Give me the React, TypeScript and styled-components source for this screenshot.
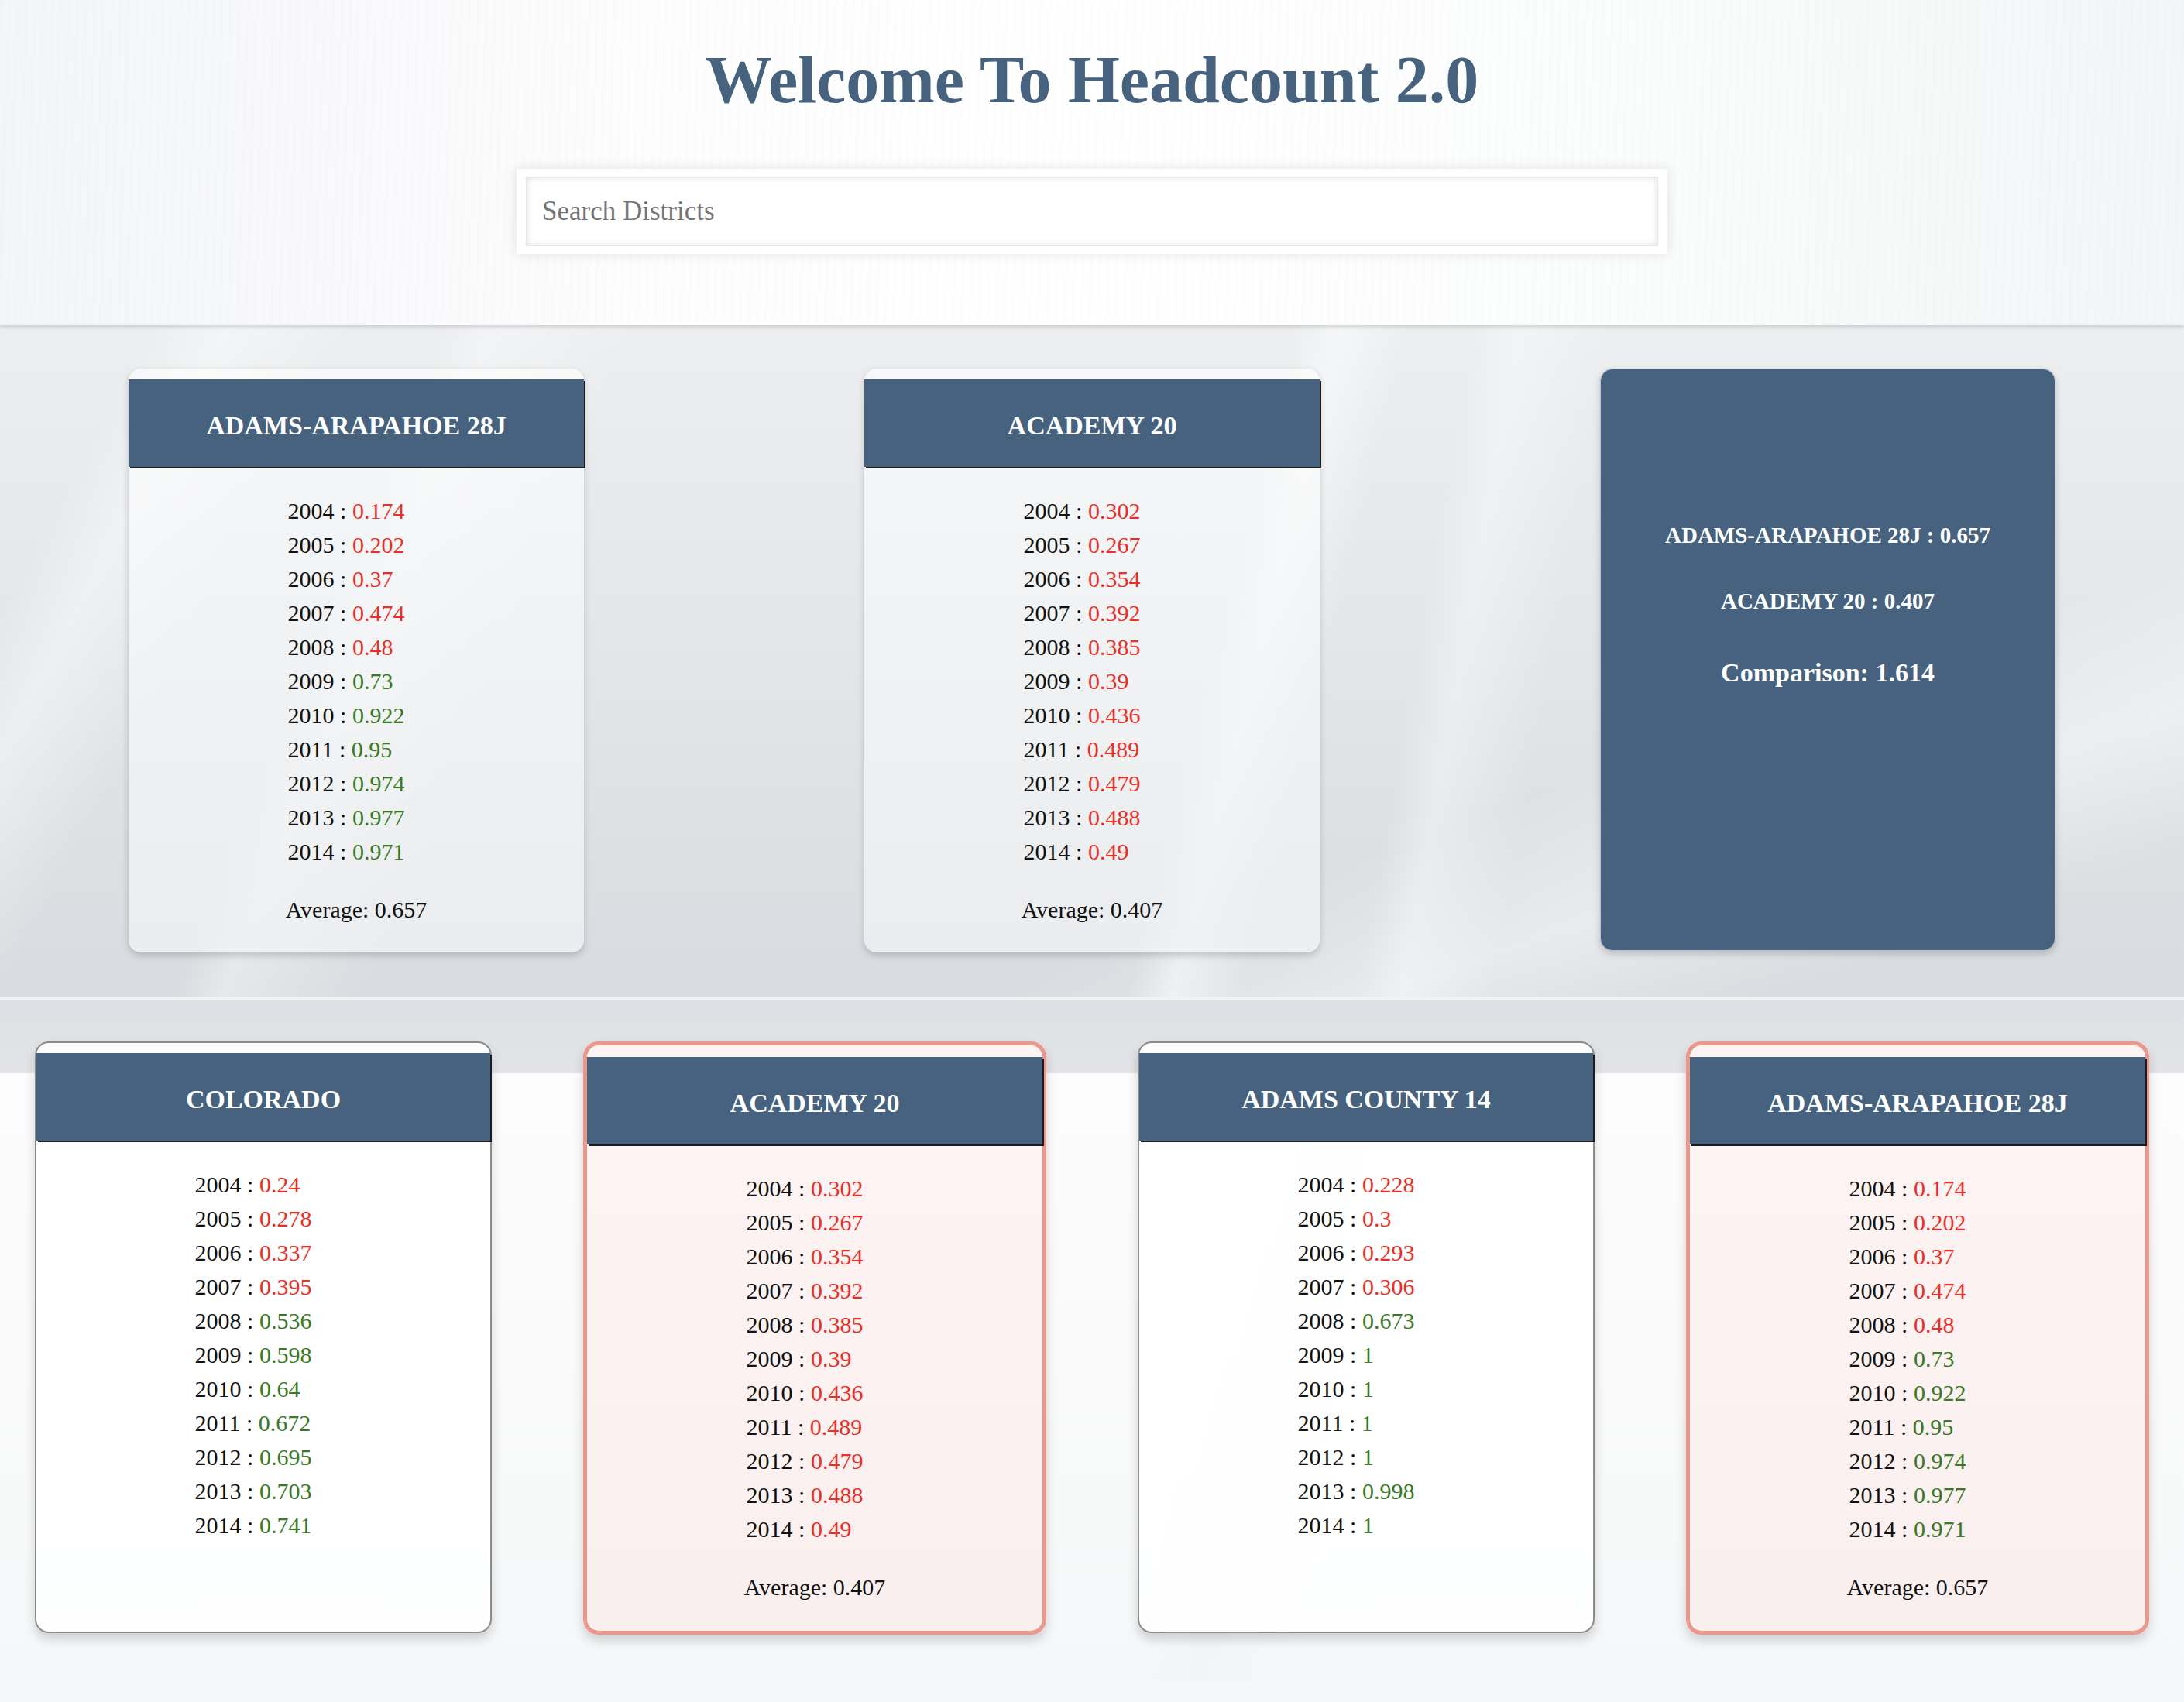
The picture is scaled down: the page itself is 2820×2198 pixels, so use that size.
import React from "react";
import styled, { createGlobalStyle, css } from "styled-components";

type District = {
  name: string;
  data: [string, number][];
  average?: number;
};

const years = ["2004", "2005", "2006", "2007", "2008", "2009", "2010", "2011", "2012", "2013", "2014"];

const makeData = (values: number[]): [string, number][] =>
  values.map((v, i) => [years[i], v]);

const adamsArapahoe: District = {
  name: "ADAMS-ARAPAHOE 28J",
  data: makeData([0.174, 0.202, 0.37, 0.474, 0.48, 0.73, 0.922, 0.95, 0.974, 0.977, 0.971]),
  average: 0.657,
};

const academy: District = {
  name: "ACADEMY 20",
  data: makeData([0.302, 0.267, 0.354, 0.392, 0.385, 0.39, 0.436, 0.489, 0.479, 0.488, 0.49]),
  average: 0.407,
};

const colorado: District = {
  name: "COLORADO",
  data: makeData([0.24, 0.278, 0.337, 0.395, 0.536, 0.598, 0.64, 0.672, 0.695, 0.703, 0.741]),
};

const adamsCounty: District = {
  name: "ADAMS COUNTY 14",
  data: makeData([0.228, 0.3, 0.293, 0.306, 0.673, 1, 1, 1, 1, 0.998, 1]),
};

const districts: { district: District; selected: boolean }[] = [
  { district: colorado, selected: false },
  { district: academy, selected: true },
  { district: adamsCounty, selected: false },
  { district: adamsArapahoe, selected: true },
];

function DistrictCard({ district, variant }: { district: District; variant: "compare" | "plain" | "selected" }) {
  return (
    <Card $variant={variant}>
      <CardHeader>{district.name}</CardHeader>
      <RowList>
        {district.data.map(([year, value]) => (
          <Row key={year}>
            {year} : <Value $low={value < 0.5}>{value}</Value>
          </Row>
        ))}
      </RowList>
      {district.average !== undefined && <Average>Average: {district.average}</Average>}
    </Card>
  );
}

export default function App() {
  return (
    <>
      <GlobalStyle />
      <Page>
        <Top>
          <Title>Welcome To Headcount 2.0</Title>
          <SearchFrame>
            <SearchInput placeholder="Search Districts" />
          </SearchFrame>
        </Top>

        <CompareBand>
          <DistrictCard district={adamsArapahoe} variant="compare" />
          <DistrictCard district={academy} variant="compare" />
          <CompareCard>
            <CompareLine>ADAMS-ARAPAHOE 28J : 0.657</CompareLine>
            <CompareLine>ACADEMY 20 : 0.407</CompareLine>
            <CompareTotal>Comparison: 1.614</CompareTotal>
          </CompareCard>
        </CompareBand>

        <DistrictGrid>
          {districts.map(({ district, selected }) => (
            <DistrictCard
              key={district.name}
              district={district}
              variant={selected ? "selected" : "plain"}
            />
          ))}
        </DistrictGrid>
      </Page>
    </>
  );
}

const GlobalStyle = createGlobalStyle`
  * { box-sizing: border-box; }
  html, body {
    margin: 0;
    padding: 0;
    background: #fafbfc;
    font-family: "Liberation Serif", "DejaVu Serif", serif;
    color: #111;
  }
`;

const Page = styled.div`
  width: 2820px;
  min-height: 2198px;
  background: linear-gradient(180deg, #ffffff 0%, #f6f7f9 100%);
`;

const Top = styled.header`
  height: 420px;
  padding-top: 60px;
  display: flex;
  flex-direction: column;
  align-items: center;
  background:
    repeating-linear-gradient(92deg, rgba(0, 0, 0, 0.007) 0 3px, transparent 3px 11px),
    linear-gradient(90deg, #f4f5f7 0%, #fdfdfe 30%, #ffffff 50%, #fbfcfc 75%, #f3f5f6 100%);
  box-shadow: 0 3px 4px rgba(0, 0, 0, 0.12);
  position: relative;
  z-index: 1;
`;

const Title = styled.h1`
  margin: 0;
  font-size: 86px;
  line-height: 86px;
  font-weight: 700;
  color: #46627f;
`;

const SearchFrame = styled.div`
  margin-top: 72px;
  width: 1486px;
  height: 110px;
  padding: 10px 12px;
  background: #ffffff;
  box-shadow: 0 0 14px rgba(30, 40, 70, 0.12);
`;

const SearchInput = styled.input`
  width: 100%;
  height: 100%;
  border: 1px solid #e4e6ec;
  outline: none;
  padding: 0 20px;
  font-family: "Liberation Serif", "DejaVu Serif", serif;
  font-size: 35px;
  color: #333;
  box-shadow: inset 0 0 8px rgba(40, 50, 90, 0.16);
  &::placeholder {
    color: #757575;
  }
`;

const CompareBand = styled.section`
  height: 872px;
  padding: 56px 166px 0;
  display: flex;
  justify-content: space-between;
  align-items: flex-start;
  border-bottom: 4px solid #f1f2f3;
  background:
    linear-gradient(118deg, transparent 0 6%, rgba(255, 255, 255, 0.4) 9%, transparent 14%),
    linear-gradient(112deg, transparent 0 18%, rgba(255, 255, 255, 0.35) 20%, transparent 26%),
    linear-gradient(104deg, transparent 0 55%, rgba(255, 255, 255, 0.5) 57%, transparent 60%),
    linear-gradient(100deg, transparent 0 64%, rgba(255, 255, 255, 0.35) 66%, transparent 70%),
    linear-gradient(160deg, transparent 0 70%, rgba(255, 255, 255, 0.4) 80%, transparent 90%),
    linear-gradient(180deg, #eceef0 0%, #e3e5e8 50%, #d8dbdf 100%);
`;

const Card = styled.article<{ $variant: "compare" | "plain" | "selected" }>`
  display: flex;
  flex-direction: column;
  border-radius: 16px;
  ${({ $variant }) =>
    $variant === "compare"
      ? css`
          width: 588px;
          height: 754px;
          padding-top: 14px;
          background: linear-gradient(180deg, rgba(255, 255, 255, 0.6), rgba(240, 242, 244, 0.75));
          box-shadow: 0 4px 10px rgba(0, 0, 0, 0.18);
        `
      : $variant === "selected"
      ? css`
          width: 598px;
          height: 766px;
          padding-top: 15px;
          border: 5px solid #eb978c;
          border-radius: 20px;
          background: linear-gradient(180deg, #fdf5f4, #f9efee);
          box-shadow: 0 8px 14px rgba(0, 0, 0, 0.16);
        `
      : css`
          width: 590px;
          height: 764px;
          padding-top: 13px;
          border: 2px solid #8c8c8c;
          border-radius: 18px;
          background: rgba(255, 255, 255, 0.88);
          box-shadow: 0 8px 14px rgba(0, 0, 0, 0.16);
        `}
`;

const CardHeader = styled.h2`
  margin: 0;
  height: 113px;
  padding-top: 6px;
  display: flex;
  align-items: center;
  justify-content: center;
  background: #46627f;
  box-shadow: 2px 2px 0 #1c1c1c;
  color: #ffffff;
  font-size: 34px;
  font-weight: 700;
`;

const RowList = styled.ul`
  list-style: none;
  margin: 35px auto 0;
  padding: 0 26px 0 0;
  display: flex;
  flex-direction: column;
  align-items: flex-start;
  align-self: center;
`;

const Row = styled.li`
  font-size: 30px;
  line-height: 44px;
  white-space: nowrap;
`;

const Value = styled.span<{ $low: boolean }>`
  color: ${({ $low }) => ($low ? "#ec2f26" : "#3a7a26")};
`;

const Average = styled.p`
  margin: 31px 0 0;
  text-align: center;
  font-size: 30px;
  line-height: 44px;
`;

const CompareCard = styled.aside`
  width: 588px;
  height: 752px;
  padding-top: 197px;
  display: flex;
  flex-direction: column;
  align-items: center;
  background: #46627f;
  border: 1px solid #b7c3cf;
  border-radius: 16px;
  box-shadow: 0 4px 10px rgba(0, 0, 0, 0.18);
  color: #ffffff;
`;

const CompareLine = styled.h3`
  margin: 0 0 50px;
  font-size: 29px;
  line-height: 35px;
  font-weight: 700;
`;

const CompareTotal = styled.h2`
  margin: 4px 0 0;
  font-size: 34px;
  line-height: 41px;
  font-weight: 700;
`;

const DistrictGrid = styled.section`
  padding: 53px 45px 60px;
  display: flex;
  justify-content: space-between;
  align-items: flex-start;
  background:
    linear-gradient(180deg, #dde0e4 0, #e2e4e7 94px, transparent 94px),
    linear-gradient(104deg, transparent 0 55%, rgba(240, 242, 245, 0.6) 58%, transparent 62%),
    linear-gradient(180deg, #fdfdfd 0%, #f6f7f8 100%);
`;
